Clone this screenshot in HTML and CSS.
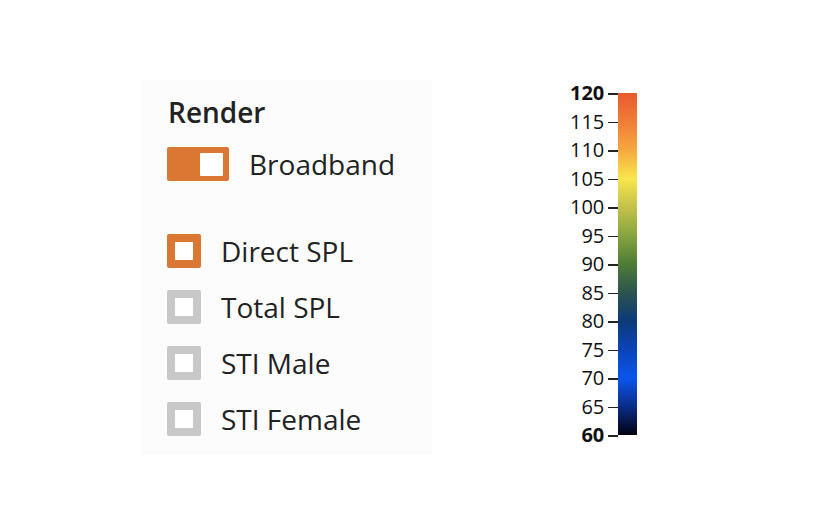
FILE: index.html
```html
<!DOCTYPE html>
<html>
<head>
<meta charset="utf-8">
<link rel="stylesheet" href="styles.css">
</head>
<body>
<div class="page">
  <div class="panel">
    <div class="title">Render</div>
    <div class="row toggle-row">
      <span class="toggle"><span class="knob"></span></span>
      <span class="label toggle-label">Broadband</span>
    </div>
    <div class="checks">
      <div class="row"><span class="box on"></span><span class="label">Direct SPL</span></div>
      <div class="row"><span class="box"></span><span class="label">Total SPL</span></div>
      <div class="row"><span class="box"></span><span class="label">STI Male</span></div>
      <div class="row"><span class="box"></span><span class="label">STI Female</span></div>
    </div>
  </div>
  <div class="scale">
    <div class="ticks">
      <span class="tick bold">120</span>
      <span class="tick">115</span>
      <span class="tick">110</span>
      <span class="tick">105</span>
      <span class="tick">100</span>
      <span class="tick">95</span>
      <span class="tick">90</span>
      <span class="tick">85</span>
      <span class="tick">80</span>
      <span class="tick">75</span>
      <span class="tick">70</span>
      <span class="tick">65</span>
      <span class="tick bold">60</span>
    </div>
    <div class="bar"></div>
  </div>
</div>
</body>
</html>
```
FILE: styles.css
```css
html, body {
  margin: 0;
  padding: 0;
  background: #ffffff;
}
body {
  width: 830px;
  height: 524px;
  font-family: "Open Sans", "Noto Sans", sans-serif;
  color: #222222;
}
.page {
  display: flex;
  align-items: flex-start;
  padding: 80px 0 0 141px;
}
.panel {
  width: 291px;
  height: 375px;
  box-sizing: border-box;
  background: #fcfcfc;
  padding: 14px 0 0 26px;
}
.title {
  font-size: 28px;
  font-weight: 600;
  line-height: 36px;
  padding-left: 1px;
}
.row {
  display: flex;
  align-items: center;
  height: 34px;
}
.toggle-row {
  margin-top: 17px;
}
.toggle {
  width: 62px;
  height: 34px;
  background: #d97733;
  border-radius: 2px;
  display: flex;
  align-items: center;
  justify-content: flex-end;
  padding-right: 6px;
  box-sizing: border-box;
}
.knob {
  width: 23px;
  height: 23px;
  background: #ffffff;
  border-radius: 1px;
}
.label {
  font-size: 28px;
  line-height: 34px;
  margin-left: 20px;
}
.toggle-label {
  margin-left: 20px;
}
.checks {
  margin-top: 53px;
  display: flex;
  flex-direction: column;
  gap: 22px;
}
.box {
  width: 34px;
  height: 34px;
  box-sizing: border-box;
  border: 8px solid #c8c8c8;
  background: #ffffff;
  border-radius: 2px;
}
.box.on {
  border-color: #d97733;
}
.scale {
  display: flex;
  margin-left: 138px;
  margin-top: 13px;
  height: 342px;
}
.ticks {
  display: flex;
  flex-direction: column;
  justify-content: space-between;
  align-items: flex-end;
  height: 342px;
}
.tick {
  position: relative;
  font-size: 20px;
  line-height: 22px;
  height: 22px;
  margin: -11px 0;
  padding-right: 14px;
  color: #111111;
}
.tick::after {
  content: "";
  position: absolute;
  right: 0;
  top: 11px;
  width: 10px;
  height: 1.5px;
  background: #222222;
}
.tick.bold {
  font-weight: 700;
}
.bar {
  width: 19px;
  height: 342px;
  background: linear-gradient(to bottom,
    #e85a2c 0%,
    #f07c38 8.33%,
    #f6a83e 16.67%,
    #f8e64c 25%,
    #c4c24a 33.33%,
    #86a440 41.67%,
    #4e7c36 50%,
    #2c5450 58.33%,
    #0c3a78 66.67%,
    #0a44b8 75%,
    #0a56ee 83.33%,
    #0a2c88 91.67%,
    #020210 100%);
}
```
